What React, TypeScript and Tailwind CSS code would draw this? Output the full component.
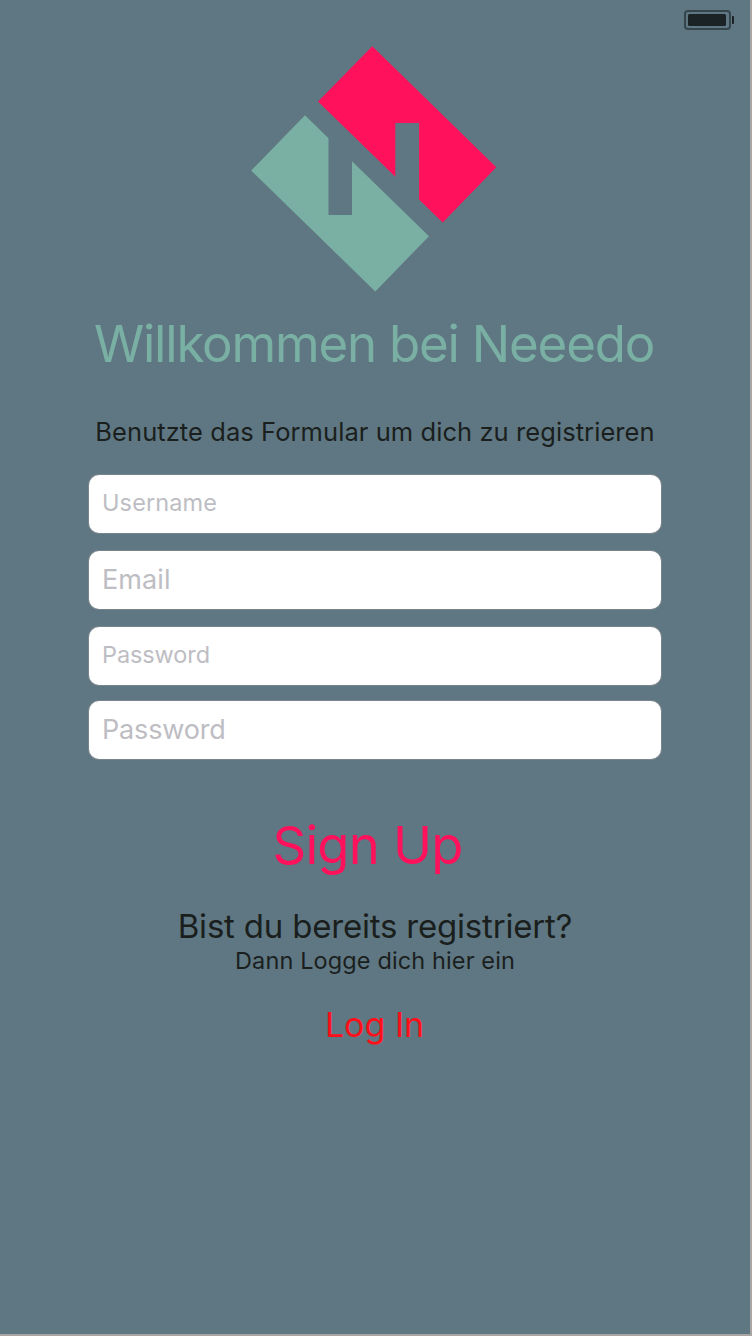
import React from "react";

function BatteryIcon() {
  return (
    <svg width="50" height="20" viewBox="0 0 50 20" className="block" aria-hidden="true">
      <rect x="1" y="1" width="45" height="18" rx="3" fill="none" stroke="#36454c" strokeWidth="2" />
      <rect x="4" y="4" width="38" height="12" rx="1.5" fill="#1b2326" />
      <path d="M48 6h1a1 1 0 0 1 1 1v6a1 1 0 0 1-1 1h-1z" fill="#1b2326" />
    </svg>
  );
}

function Logo() {
  return (
    <svg width="246" height="246" viewBox="251 46 246 246" className="block" aria-label="Neeedo">
      <path d="M372.3 46.3 496.3 167.3 442.7 222.5 419 199.5V123H395.3V176.7L318 101.5z" fill="#ff115b" />
      <path d="M305 115.3 328.5 138.2V215H352V161.2L429 236.2 375.3 291.5 251.2 170.5z" fill="#79b0a3" />
    </svg>
  );
}

type FieldProps = { label: string; type: string; className: string };

function Field({ label, type, className }: FieldProps) {
  return (
    <input
      type={type}
      placeholder={label}
      aria-label={label}
      className={`block h-[58px] w-[572px] rounded-[10px] bg-white pl-[13px] outline-none ring-1 ring-[#8b9093]/60 placeholder:text-[#bdbdc3] placeholder:opacity-100 ${className}`}
    />
  );
}

export default function App() {
  return (
    <div className="h-[1336px] w-[756px] bg-white font-['Inter',sans-serif]">
      <div className="h-[1336px] w-[752px] border-r-2 border-b-2 border-[#a8a5a3] bg-[#5f7782]">
        <main className="flex h-[1334px] w-[750px] flex-col items-center whitespace-nowrap text-[#1a1f1e]">
          <header className="flex h-[46px] w-full justify-end pt-[10px] pr-[16px]">
            <BatteryIcon />
          </header>
          <div className="pr-[3px]">
            <Logo />
          </div>
          <h1 className="mt-[22px] mr-[2px] h-[60px] text-[51px] leading-[60px] tracking-[-1.2px] text-[#79b0a3]">
            Willkommen bei Neeedo
          </h1>
          <p className="mt-[42px] h-[32px] text-[25.5px] leading-[32px] tracking-[0.07px]">
            Benutzte das Formular um dich zu registrieren
          </p>
          <form className="mt-[27px] flex flex-col">
            <Field label="Username" type="text" className="pb-[3px] text-[23.5px] tracking-[0.12px]" />
            <Field label="Email" type="email" className="mt-[18px] pb-px text-[27px] tracking-[0.1px]" />
            <Field label="Password" type="password" className="mt-[18px] pb-[3px] text-[23.5px] tracking-[-0.1px]" />
            <Field label="Password" type="password" className="mt-4 pb-px text-[27px] tracking-[-0.15px]" />
          </form>
          <button className="mt-[54px] mr-[15px] h-[64px] text-[52.5px] leading-[64px] tracking-[-0.8px] text-[#ff115b]">
            Sign Up
          </button>
          <h2 className="mt-[29px] h-[40px] text-[33px] leading-[40px] tracking-[-0.2px]">Bist du bereits registriert?</h2>
          <p className="mt-px h-[28px] text-[23.5px] leading-[28px] tracking-[0.12px]">Dann Logge dich hier ein</p>
          <a className="mt-[30px] mr-px h-[40px] text-[34px] leading-[40px] text-[#ff0f19]">Log In</a>
        </main>
      </div>
    </div>
  );
}
